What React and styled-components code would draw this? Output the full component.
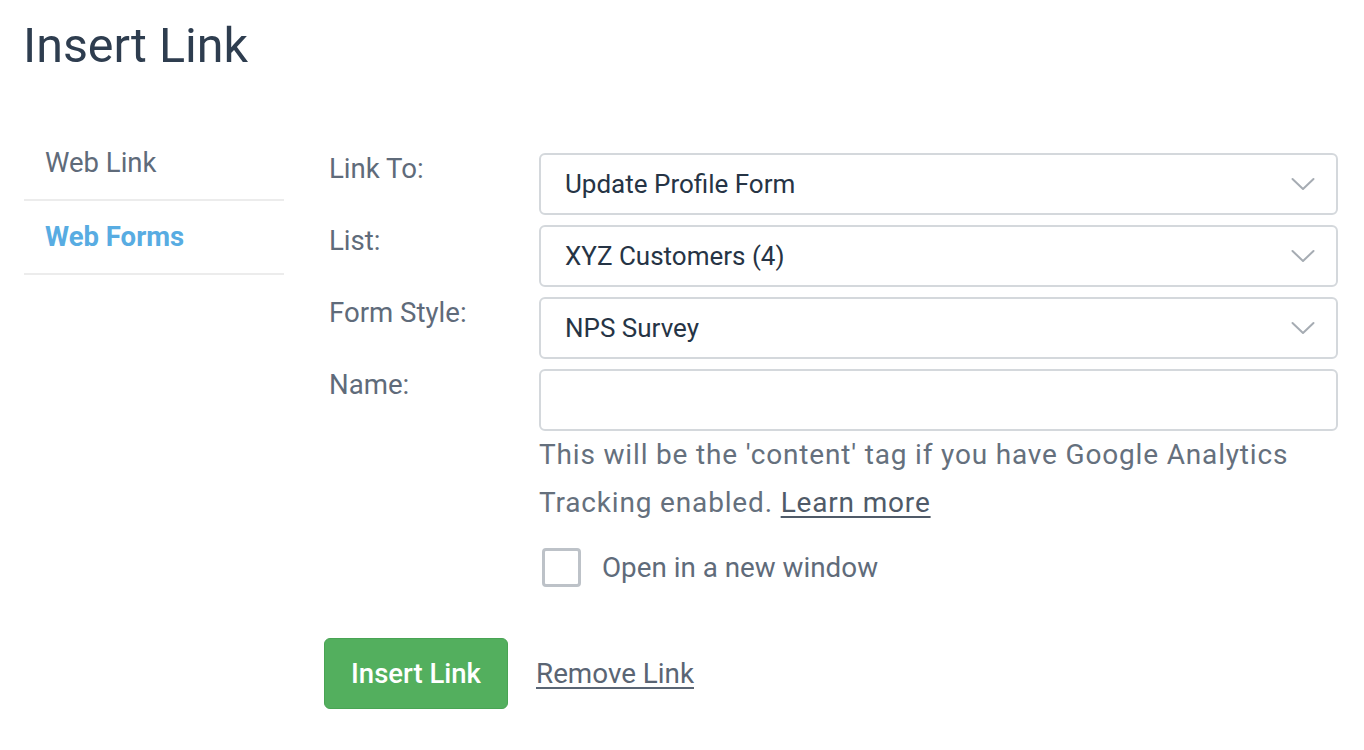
import React from "react";
import styled, { createGlobalStyle } from "styled-components";

const GlobalStyle = createGlobalStyle`
  html, body { margin: 0; padding: 0; background: #ffffff; }
  body { font-family: Roboto, "Liberation Sans", Arial, sans-serif; }
  * { box-sizing: border-box; }
`;

const Page = styled.div`
  padding: 18px 26px 0 22px;
  width: 1364px;
`;

const Title = styled.h1`
  margin: 0 0 0 1px;
  font-size: 48.4px;
  line-height: 56px;
  font-weight: 400;
  color: #2e3d4f;
`;

const Main = styled.div`
  display: flex;
  margin-top: 53px;
  padding-left: 2px;
`;

const Sidebar = styled.nav`
  width: 260px;
  flex: none;
  display: flex;
  flex-direction: column;
`;

const NavItem = styled.div`
  padding: 20px 0 20px 21px;
  font-size: 27.5px;
  line-height: 32px;
  border-bottom: 2px solid #ececec;
  color: ${(p) => (p.$active ? "#58ace2" : "#5f6b7a")};
  font-weight: ${(p) => (p.$active ? 700 : 400)};
`;

const FormCol = styled.div`
  flex: 1;
  margin-left: 40px;
  padding-top: 26px;
`;

const Grid = styled.div`
  display: grid;
  grid-template-columns: 215px 1fr;
  row-gap: 10px;
`;

const Label = styled.div`
  padding-left: 5px;
  font-size: 27.6px;
  line-height: 32px;
  color: #5f6b7a;
`;

const SelectBox = styled.div`
  height: 62px;
  display: flex;
  align-items: center;
  justify-content: space-between;
  padding: 0 21px 0 24px;
  border: 2px solid #d4d8dc;
  border-radius: 6px;
  font-size: 26px;
  color: #263445;
  background: #fff;
`;

const TextInput = styled.div`
  height: 62px;
  border: 2px solid #d4d8dc;
  border-radius: 6px;
  background: #fff;
`;

const Control = styled.div`
  display: flex;
  flex-direction: column;
`;

const Help = styled.p`
  margin: 0;
  font-size: 28px;
  letter-spacing: 0.83px;
  line-height: 48px;
  color: #65707d;
`;

const HelpLink = styled.a`
  color: #4f5a68;
  text-decoration: underline;
  text-underline-offset: 4px;
  text-decoration-thickness: 2px;
`;

const CheckRow = styled.label`
  display: flex;
  align-items: center;
  gap: 21px;
  margin-top: 21px;
  margin-left: 3px;
  font-size: 27.8px;
  color: #5f6b7a;
`;

const CheckBox = styled.span`
  width: 39px;
  height: 39px;
  border: 3px solid #bdc2c8;
  border-radius: 4px;
  background: #fff;
  flex: none;
`;

const Actions = styled.div`
  display: flex;
  align-items: center;
  gap: 28px;
  margin-top: 51px;
`;

const PrimaryButton = styled.button`
  width: 184px;
  height: 71px;
  border: 1px solid #49a454;
  border-radius: 6px;
  background: #53af5e;
  color: #ffffff;
  font-family: inherit;
  font-size: 27.5px;
  font-weight: 500;
  padding: 0;
  cursor: pointer;
`;

const TextLink = styled.a`
  font-size: 27.8px;
  color: #5a6574;
  text-decoration: underline;
  text-underline-offset: 4px;
  text-decoration-thickness: 2px;
`;

const Chevron = () => (
  <svg width="24" height="14" viewBox="0 0 24 14" fill="none">
    <polyline points="1.5,2 12,12 22.5,2" stroke="#a6acb3" strokeWidth="2" strokeLinecap="round" strokeLinejoin="round" />
  </svg>
);

const Select = ({ value }) => (
  <SelectBox>
    <span>{value}</span>
    <Chevron />
  </SelectBox>
);

export default function App() {
  return (
    <>
      <GlobalStyle />
      <Page>
        <Title>Insert Link</Title>
        <Main>
          <Sidebar>
            <NavItem>Web Link</NavItem>
            <NavItem $active>Web Forms</NavItem>
          </Sidebar>
          <FormCol>
            <Grid>
              <Label>Link To:</Label>
              <Select value="Update Profile Form" />
              <Label>List:</Label>
              <Select value="XYZ Customers (4)" />
              <Label>Form Style:</Label>
              <Select value="NPS Survey" />
              <Label>Name:</Label>
              <Control>
                <TextInput />
                <Help>
                  This will be the 'content' tag if you have Google Analytics Tracking enabled.{" "}
                  <HelpLink href="#">Learn more</HelpLink>
                </Help>
                <CheckRow>
                  <CheckBox />
                  Open in a new window
                </CheckRow>
              </Control>
            </Grid>
            <Actions>
              <PrimaryButton>Insert Link</PrimaryButton>
              <TextLink href="#">Remove Link</TextLink>
            </Actions>
          </FormCol>
        </Main>
      </Page>
    </>
  );
}
